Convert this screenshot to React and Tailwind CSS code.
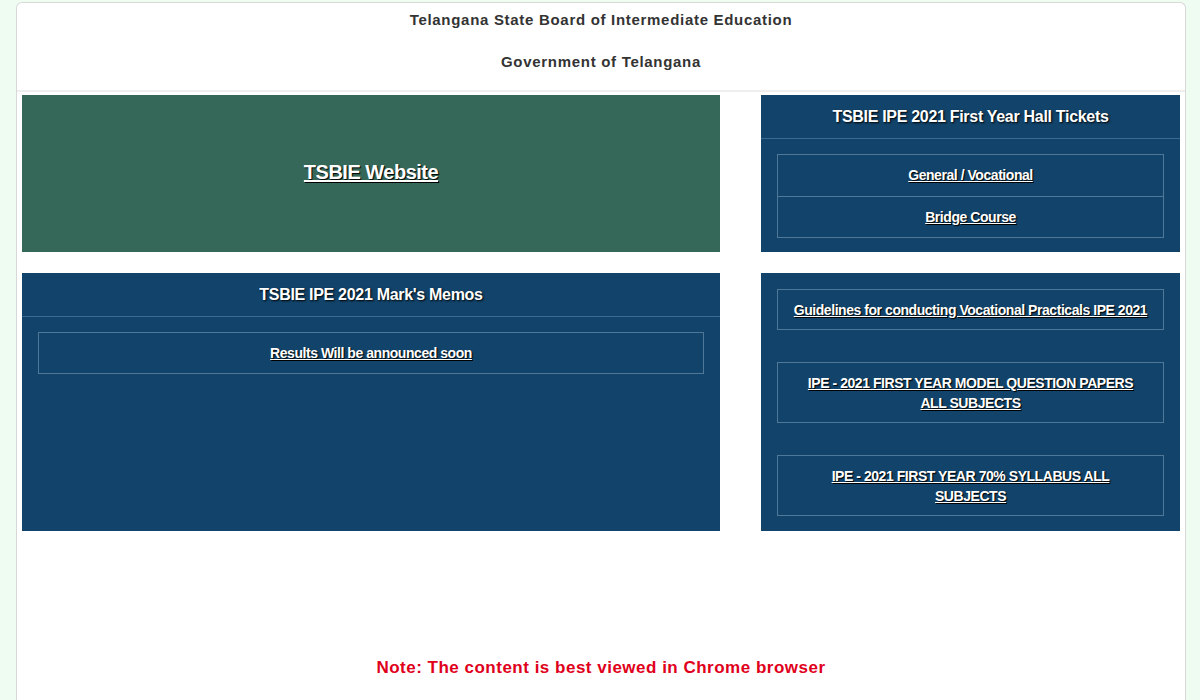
import React from 'react'

const halls = ['General / Vocational', 'Bridge Course']

const links = [
  'Guidelines for conducting Vocational Practicals IPE 2021',
  'IPE - 2021 FIRST YEAR MODEL QUESTION PAPERS ALL SUBJECTS',
  'IPE - 2021 FIRST YEAR 70% SYLLABUS ALL SUBJECTS'
]

const linkCls =
  'text-[14px] font-bold tracking-[-0.45px] text-white underline [text-shadow:1px_1px_1px_#000]'

export default function App() {
  return (
    <div className="min-h-[700px] bg-[#eefcf2] pl-4 pr-[14px] pt-[2px] font-['Liberation_Sans',Arial,sans-serif]">
      <div className="h-[698px] rounded-t-[6px] border border-b-0 border-[#d8d8d8] bg-white">
        {/* header */}
        <div className="flex flex-col items-center border-b-2 border-[#eeeeee] pb-[17px] text-[15px] font-bold tracking-[0.7px] text-[#333333]">
          <p className="mt-[6px]">Telangana State Board of Intermediate Education</p>
          <p className="mt-[19px]">Government of Telangana</p>
        </div>

        <div className="grid grid-cols-[698px_419px] gap-x-[41px] gap-y-[21px] pl-[5px] pt-[3px]">
          {/* website */}
          <div className="flex h-[157px] items-center justify-center bg-[#356859]">
            <a className="mb-[4px] text-[20px] font-bold tracking-[-0.5px] text-white underline [text-shadow:1px_1px_1px_#000]">
              TSBIE Website
            </a>
          </div>

          {/* hall tickets */}
          <div className="h-[157px] bg-[#12436a]">
            <div className="flex h-[44px] items-center justify-center border-b border-[#3b6a90] text-[16px] font-bold tracking-[-0.3px] text-white [text-shadow:1px_1px_2px_#000]">
              TSBIE IPE 2021 First Year Hall Tickets
            </div>
            <div className="mx-[16px] mt-[15px] border border-[#4f7798]">
              {halls.map((h, i) => (
                <div
                  key={h}
                  className={`flex h-[41px] items-center justify-center ${i ? 'border-t border-[#4f7798]' : ''}`}
                >
                  <a className={linkCls}>{h}</a>
                </div>
              ))}
            </div>
          </div>

          {/* mark memos */}
          <div className="h-[258px] bg-[#12436a]">
            <div className="flex h-[44px] items-center justify-center border-b border-[#3b6a90] text-[16px] font-bold tracking-[-0.3px] text-white [text-shadow:1px_1px_2px_#000]">
              TSBIE IPE 2021 Mark's Memos
            </div>
            <div className="mx-[16px] mt-[15px] flex h-[42px] items-center justify-center border border-[#4f7798]">
              <a className={linkCls}>Results Will be announced soon</a>
            </div>
          </div>

          {/* downloads */}
          <div className="flex h-[258px] flex-col gap-[32px] bg-[#12436a] px-[16px] pt-[16px]">
            {links.map((l, i) => (
              <div
                key={l}
                className={`flex items-center justify-center border border-[#4f7798] text-center leading-[20px] ${i ? 'h-[61px] px-5' : 'h-[41px] px-1'}`}
              >
                <a className={linkCls}>{l}</a>
              </div>
            ))}
          </div>
        </div>

        <p className="mt-[124px] text-center text-[17px] font-bold tracking-[0.5px] text-[#e0001b]">
          Note: The content is best viewed in Chrome browser
        </p>
      </div>
    </div>
  )
}
